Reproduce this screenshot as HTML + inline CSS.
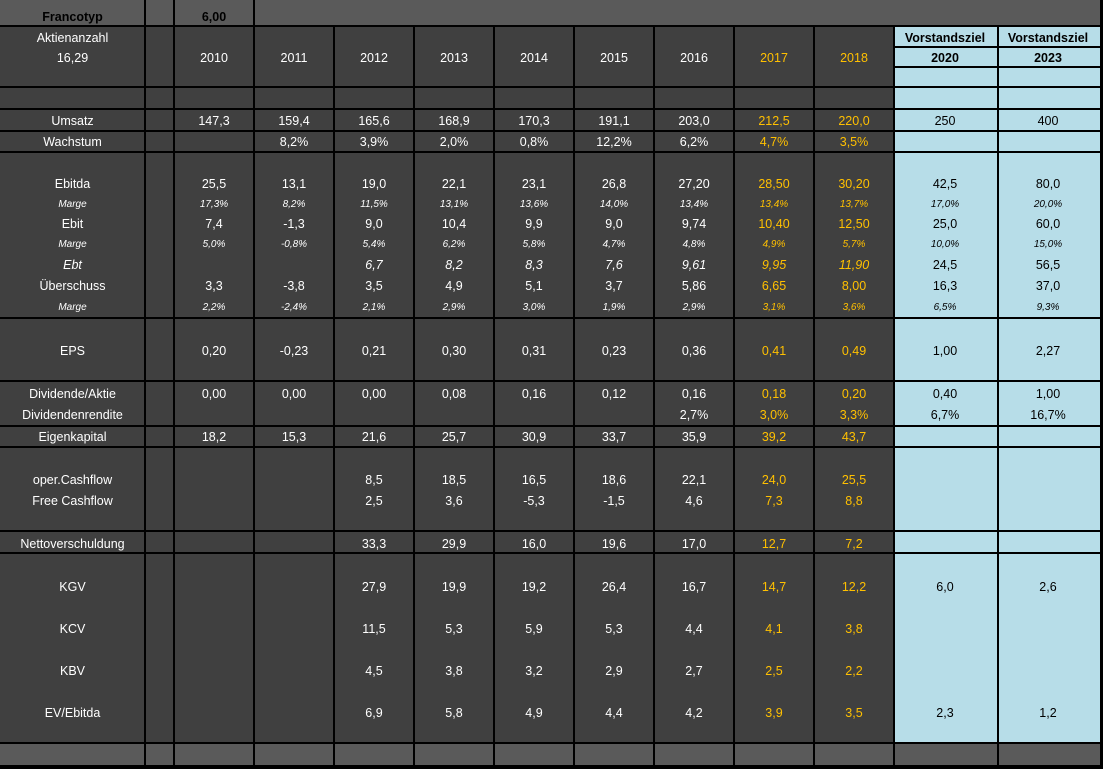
<!DOCTYPE html>
<html><head><meta charset="utf-8"><style>
*{margin:0;padding:0;box-sizing:border-box}
body{width:1103px;height:769px;background:#000;position:relative;overflow:hidden;font-family:"Liberation Sans",sans-serif}
.r{position:absolute}
.l{position:absolute;left:0;display:flex;height:16px;line-height:16px;font-size:12.5px;white-space:nowrap}
.l span{flex:none;width:80px;text-align:center;color:#fff}
.l span:nth-child(1){width:145px}
.l span:nth-child(2){width:29px}
.l span:nth-child(10),.l span:nth-child(11){color:#ffc000}
.l span:nth-child(12){width:102px;color:#000}
.l span:nth-child(13){width:104px;color:#000}
.i{font-style:italic;font-size:10px}
.e{font-style:italic}
.b span{font-weight:bold}
</style></head><body>
<!-- backgrounds -->
<div class="r" style="left:0;top:0;width:1100px;height:26px;background:#5a5a5a"></div>
<div class="r" style="left:0;top:26px;width:1100px;height:717px;background:#404040"></div>
<div class="r" style="left:894px;top:26px;width:206px;height:717px;background:#b7dde8"></div>
<div class="r" style="left:0;top:743px;width:1100px;height:23px;background:#5a5a5a"></div>
<!-- vertical lines -->
<div class="r" style="left:144px;top:0;width:2px;height:769px;background:#000"></div>
<div class="r" style="left:173px;top:0;width:2px;height:769px;background:#000"></div>
<div class="r" style="left:253px;top:0;width:2px;height:769px;background:#000"></div>
<div class="r" style="left:333px;top:26px;width:2px;height:743px;background:#000"></div>
<div class="r" style="left:413px;top:26px;width:2px;height:743px;background:#000"></div>
<div class="r" style="left:493px;top:26px;width:2px;height:743px;background:#000"></div>
<div class="r" style="left:573px;top:26px;width:2px;height:743px;background:#000"></div>
<div class="r" style="left:653px;top:26px;width:2px;height:743px;background:#000"></div>
<div class="r" style="left:733px;top:26px;width:2px;height:743px;background:#000"></div>
<div class="r" style="left:813px;top:26px;width:2px;height:743px;background:#000"></div>
<div class="r" style="left:893px;top:26px;width:2px;height:743px;background:#000"></div>
<div class="r" style="left:997px;top:26px;width:2px;height:743px;background:#000"></div>
<div class="r" style="left:1100px;top:0;width:3px;height:769px;background:#000"></div>
<!-- horizontal lines -->
<div class="r" style="left:0;top:25px;width:1103px;height:2px;background:#000"></div>
<div class="r" style="left:894px;top:46px;width:206px;height:2px;background:#000"></div>
<div class="r" style="left:894px;top:66px;width:206px;height:2px;background:#000"></div>
<div class="r" style="left:0;top:86px;width:1103px;height:2px;background:#000"></div>
<div class="r" style="left:0;top:108px;width:1103px;height:2px;background:#000"></div>
<div class="r" style="left:0;top:130px;width:1103px;height:2px;background:#000"></div>
<div class="r" style="left:0;top:151px;width:1103px;height:2px;background:#000"></div>
<div class="r" style="left:0;top:317px;width:1103px;height:2px;background:#000"></div>
<div class="r" style="left:0;top:380px;width:1103px;height:2px;background:#000"></div>
<div class="r" style="left:0;top:425px;width:1103px;height:2px;background:#000"></div>
<div class="r" style="left:0;top:446px;width:1103px;height:2px;background:#000"></div>
<div class="r" style="left:0;top:530px;width:1103px;height:2px;background:#000"></div>
<div class="r" style="left:0;top:552px;width:1103px;height:2px;background:#000"></div>
<div class="r" style="left:0;top:742px;width:1103px;height:2px;background:#000"></div>
<div class="r" style="left:0;top:765px;width:1103px;height:4px;background:#000"></div>

<!-- text -->
<div class="l b" style="top:9px"><span style="color:#000">Francotyp</span><span></span><span style="color:#000">6,00</span></div>
<div class="l" style="top:30px"><span>Aktienanzahl</span><span></span><span></span><span></span><span></span><span></span><span></span><span></span><span></span><span></span><span></span><span style="font-weight:bold">Vorstandsziel</span><span style="font-weight:bold">Vorstandsziel</span></div>
<div class="l" style="top:50px"><span>16,29</span><span></span><span>2010</span><span>2011</span><span>2012</span><span>2013</span><span>2014</span><span>2015</span><span>2016</span><span>2017</span><span>2018</span><span style="font-weight:bold">2020</span><span style="font-weight:bold">2023</span></div>
<div class="l" style="top:113px"><span>Umsatz</span><span></span><span>147,3</span><span>159,4</span><span>165,6</span><span>168,9</span><span>170,3</span><span>191,1</span><span>203,0</span><span>212,5</span><span>220,0</span><span>250</span><span>400</span></div>
<div class="l" style="top:134px"><span>Wachstum</span><span></span><span></span><span>8,2%</span><span>3,9%</span><span>2,0%</span><span>0,8%</span><span>12,2%</span><span>6,2%</span><span>4,7%</span><span>3,5%</span><span></span><span></span></div>
<div class="l" style="top:176px"><span>Ebitda</span><span></span><span>25,5</span><span>13,1</span><span>19,0</span><span>22,1</span><span>23,1</span><span>26,8</span><span>27,20</span><span>28,50</span><span>30,20</span><span>42,5</span><span>80,0</span></div>
<div class="l i" style="top:197px"><span>Marge</span><span></span><span>17,3%</span><span>8,2%</span><span>11,5%</span><span>13,1%</span><span>13,6%</span><span>14,0%</span><span>13,4%</span><span>13,4%</span><span>13,7%</span><span>17,0%</span><span>20,0%</span></div>
<div class="l" style="top:216px"><span>Ebit</span><span></span><span>7,4</span><span>-1,3</span><span>9,0</span><span>10,4</span><span>9,9</span><span>9,0</span><span>9,74</span><span>10,40</span><span>12,50</span><span>25,0</span><span>60,0</span></div>
<div class="l i" style="top:237px"><span>Marge</span><span></span><span>5,0%</span><span>-0,8%</span><span>5,4%</span><span>6,2%</span><span>5,8%</span><span>4,7%</span><span>4,8%</span><span>4,9%</span><span>5,7%</span><span>10,0%</span><span>15,0%</span></div>
<div class="l e" style="top:257px"><span>Ebt</span><span></span><span></span><span></span><span>6,7</span><span>8,2</span><span>8,3</span><span>7,6</span><span>9,61</span><span>9,95</span><span>11,90</span><span style="font-style:normal">24,5</span><span style="font-style:normal">56,5</span></div>
<div class="l" style="top:278px"><span>Überschuss</span><span></span><span>3,3</span><span>-3,8</span><span>3,5</span><span>4,9</span><span>5,1</span><span>3,7</span><span>5,86</span><span>6,65</span><span>8,00</span><span>16,3</span><span>37,0</span></div>
<div class="l i" style="top:300px"><span>Marge</span><span></span><span>2,2%</span><span>-2,4%</span><span>2,1%</span><span>2,9%</span><span>3,0%</span><span>1,9%</span><span>2,9%</span><span>3,1%</span><span>3,6%</span><span>6,5%</span><span>9,3%</span></div>
<div class="l" style="top:343px"><span>EPS</span><span></span><span>0,20</span><span>-0,23</span><span>0,21</span><span>0,30</span><span>0,31</span><span>0,23</span><span>0,36</span><span>0,41</span><span>0,49</span><span>1,00</span><span>2,27</span></div>
<div class="l" style="top:386px"><span>Dividende/Aktie</span><span></span><span>0,00</span><span>0,00</span><span>0,00</span><span>0,08</span><span>0,16</span><span>0,12</span><span>0,16</span><span>0,18</span><span>0,20</span><span>0,40</span><span>1,00</span></div>
<div class="l" style="top:407px"><span>Dividendenrendite</span><span></span><span></span><span></span><span></span><span></span><span></span><span></span><span>2,7%</span><span>3,0%</span><span>3,3%</span><span>6,7%</span><span>16,7%</span></div>
<div class="l" style="top:429px"><span>Eigenkapital</span><span></span><span>18,2</span><span>15,3</span><span>21,6</span><span>25,7</span><span>30,9</span><span>33,7</span><span>35,9</span><span>39,2</span><span>43,7</span><span></span><span></span></div>
<div class="l" style="top:472px"><span>oper.Cashflow</span><span></span><span></span><span></span><span>8,5</span><span>18,5</span><span>16,5</span><span>18,6</span><span>22,1</span><span>24,0</span><span>25,5</span><span></span><span></span></div>
<div class="l" style="top:493px"><span>Free Cashflow</span><span></span><span></span><span></span><span>2,5</span><span>3,6</span><span>-5,3</span><span>-1,5</span><span>4,6</span><span>7,3</span><span>8,8</span><span></span><span></span></div>
<div class="l" style="top:536px"><span>Nettoverschuldung</span><span></span><span></span><span></span><span>33,3</span><span>29,9</span><span>16,0</span><span>19,6</span><span>17,0</span><span>12,7</span><span>7,2</span><span></span><span></span></div>
<div class="l" style="top:579px"><span>KGV</span><span></span><span></span><span></span><span>27,9</span><span>19,9</span><span>19,2</span><span>26,4</span><span>16,7</span><span>14,7</span><span>12,2</span><span>6,0</span><span>2,6</span></div>
<div class="l" style="top:621px"><span>KCV</span><span></span><span></span><span></span><span>11,5</span><span>5,3</span><span>5,9</span><span>5,3</span><span>4,4</span><span>4,1</span><span>3,8</span><span></span><span></span></div>
<div class="l" style="top:663px"><span>KBV</span><span></span><span></span><span></span><span>4,5</span><span>3,8</span><span>3,2</span><span>2,9</span><span>2,7</span><span>2,5</span><span>2,2</span><span></span><span></span></div>
<div class="l" style="top:705px"><span>EV/Ebitda</span><span></span><span></span><span></span><span>6,9</span><span>5,8</span><span>4,9</span><span>4,4</span><span>4,2</span><span>3,9</span><span>3,5</span><span>2,3</span><span>1,2</span></div>
</body></html>
